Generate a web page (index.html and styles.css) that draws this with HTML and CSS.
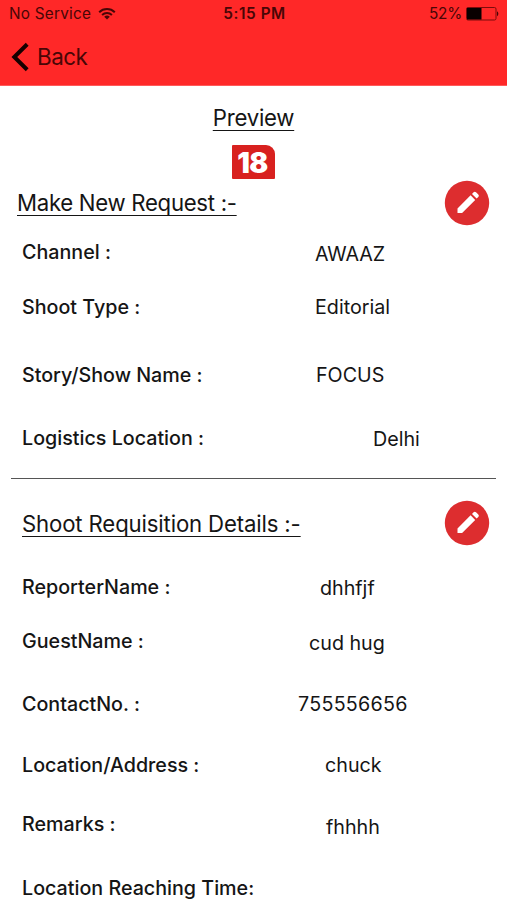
FILE: index.html
```html
<!DOCTYPE html>
<html lang="en">
<head>
<meta charset="utf-8">
<title>Preview</title>
<link rel="stylesheet" href="styles.css">
</head>
<body>
<header class="top">
  <div class="status">
    <div class="carrier"><span>No Service</span>
      <svg class="wifi" width="18" height="14" viewBox="0 0 18 14" fill="none" stroke="#480606" stroke-width="2"><path d="M1.2 5.2a11.2 11.2 0 0 1 15.6 0M4.1 8a7.2 7.2 0 0 1 9.8 0"/><path d="M9 12.5 6.2 9.8a4 4 0 0 1 5.6 0z" fill="#480606" stroke="none"/></svg>
    </div>
    <div class="clock">5:15 PM</div>
    <div class="power"><span>52%</span>
      <svg class="battery" width="34" height="14" viewBox="0 0 34 14"><rect x=".5" y=".5" width="29.5" height="12.5" rx="1.5" fill="none" stroke="#7c0b0b"/><rect x="1" y="1" width="14.5" height="11.5" fill="#080000"/><path d="M31 4.2a3 3 0 0 1 0 5z" fill="#480606"/></svg>
    </div>
  </div>
  <nav class="back">
    <svg width="18" height="30" viewBox="0 0 18 30" fill="none" stroke="#160000" stroke-width="4"><path d="M16.2 2.3 3.3 15 16.2 27.7"/></svg>
    <span>Back</span>
  </nav>
</header>
<main>
  <h1 class="title"><span class="line">Preview</span></h1>
  <div class="brand"><span>18</span></div>
  <section class="request">
    <div class="heading">
      <h2 class="line">Make New Request :-</h2>
      <svg class="edit" width="46" height="46" viewBox="0 0 46 46"><circle cx="23" cy="23" r="22.2" fill="#dd2d2f"/><path d="M13.5 33v-4.6L26.6 15.3l4.6 4.6L18.1 33zM28 13.9l1.6-1.6q1.2-1.2 2.4 0l2.3 2.3q1.2 1.2 0 2.4L32.6 18.5z" fill="#fff"/></svg>
    </div>
    <dl>
      <div class="row channel"><dt>Channel :</dt><dd>AWAAZ</dd></div>
      <div class="row type"><dt>Shoot Type :</dt><dd>Editorial</dd></div>
      <div class="row story"><dt>Story/Show Name :</dt><dd>FOCUS</dd></div>
      <div class="row logistics"><dt>Logistics Location :</dt><dd>Delhi</dd></div>
    </dl>
  </section>
  <hr>
  <section class="details">
    <div class="heading">
      <h2 class="line">Shoot Requisition Details :-</h2>
      <svg class="edit" width="46" height="46" viewBox="0 0 46 46"><circle cx="23" cy="23" r="22.2" fill="#dd2d2f"/><path d="M13.5 33v-4.6L26.6 15.3l4.6 4.6L18.1 33zM28 13.9l1.6-1.6q1.2-1.2 2.4 0l2.3 2.3q1.2 1.2 0 2.4L32.6 18.5z" fill="#fff"/></svg>
    </div>
    <dl>
      <div class="row reporter"><dt>ReporterName :</dt><dd>dhhfjf</dd></div>
      <div class="row guest"><dt>GuestName :</dt><dd>cud hug</dd></div>
      <div class="row contact"><dt>ContactNo. :</dt><dd>755556656</dd></div>
      <div class="row address"><dt>Location/Address :</dt><dd>chuck</dd></div>
      <div class="row remarks"><dt>Remarks :</dt><dd>fhhhh</dd></div>
      <div class="row reaching"><dt>Location Reaching Time:</dt></div>
    </dl>
  </section>
</main>
</body>
</html>
```
FILE: styles.css
```css
* { box-sizing: border-box; }
body, h1, h2, dl, dd { margin: 0; }
body {
  height: 900px;
  overflow: hidden;
  background: #fff;
  color: #151515;
  font-family: Inter, "Liberation Sans", sans-serif;
}
svg { display: block; flex: none; }
.top { height: 86px; background: #ff2828; color: #480606; border-bottom: 1px solid #ff5a5a; }
.status {
  display: grid;
  grid-template-columns: 1fr auto 1fr;
  height: 28px;
  padding: 0 7px 0 9px;
  align-items: center;
  font-size: 15.3px;
  line-height: 28px;
}
.carrier, .power { display: flex; align-items: center; }
.carrier { gap: 7px; letter-spacing: .25px; }
.power { justify-content: flex-end; gap: 4px; letter-spacing: -.2px; }
.clock { font-weight: 600; letter-spacing: .6px; }
.back { display: flex; align-items: center; height: 57px; padding-left: 11px; gap: 8px; font-size: 22.4px; letter-spacing: -.5px; }
.title { padding-top: 18px; height: 59px; text-align: center; font-size: 22.2px; font-weight: 400; line-height: 28px; letter-spacing: -.25px; }
.line { text-decoration: underline; text-decoration-thickness: 1px; text-underline-offset: 4px; text-decoration-skip-ink: none; }
.brand {
  width: 43px;
  height: 34px;
  margin-left: 232px;
  padding-right: 2px;
  border-radius: 1px 9px 1px 1px;
  background: #d8211f;
  color: #fff;
  text-align: center;
  font-size: 28px;
  font-weight: 900;
  line-height: 36px;
  letter-spacing: -.5px;
}
.heading { display: flex; justify-content: space-between; align-items: center; height: 46px; padding: 0 17px; }
.heading h2 { font-size: 22.2px; line-height: 28px; font-weight: 400; white-space: nowrap; letter-spacing: -.3px; }
.details .heading { padding-left: 22px; }
.details .heading h2 { letter-spacing: -.15px; padding-top: 1px; }
.request { padding-top: 1px; height: 299px; }
.request dl { padding-top: 14px; }
.details dl { padding-top: 29px; }
hr { height: 1px; border: 0; margin: 0 11px; background: #555; }
.details { padding-top: 21px; }
.row { display: grid; grid-template-columns: 276px 1fr; padding-left: 22px; font-size: 19.7px; line-height: 24px; white-space: nowrap; }
dt { font-weight: 500; }
.channel { height: 55px; }
.channel dd { padding: 2px 0 0 17px; letter-spacing: -.1px; }
.type { height: 68px; }
.type dd { padding-left: 17px; }
.story { height: 63px; }
.story dd { padding-left: 18px; }
.logistics dd { padding: 1px 0 0 75px; }
.reporter { height: 54px; }
.reporter dd { padding: 1px 0 0 22px; }
.guest { height: 63px; }
.guest dd { padding: 2px 0 0 11px; }
.contact { height: 61px; }
.contact dd { letter-spacing: .25px; }
.address { height: 59px; }
.address dd { padding-left: 27px; }
.remarks { height: 64px; }
.remarks dd { padding: 3px 0 0 28px; }
```
